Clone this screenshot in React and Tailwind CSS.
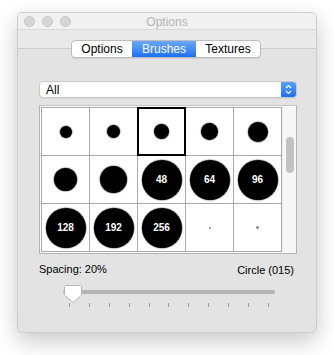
import React from 'react';

const font = { fontFamily: '"Liberation Sans", Arial, sans-serif' };

// brush presets: diameter in px, label for the big ones
const brushes = [
  { d: 12 }, { d: 13 }, { d: 15, selected: true }, { d: 17 }, { d: 20 },
  { d: 23 }, { d: 27 }, { d: 40, label: '48' }, { d: 40, label: '64' }, { d: 40, label: '96' },
  { d: 40, label: '128' }, { d: 40, label: '192' }, { d: 40, label: '256' }, { dot: 2 }, { dot: 3 },
];

const TrafficLight = () => (
  <div className="w-[11px] h-[11px] rounded-full bg-[#d6d6d6] border border-[#c6c6c6]" />
);

const BrushCell = ({ b }) => (
  <div
    className={`bg-white flex items-center justify-center ${
      b.selected ? 'outline-2 outline-black -outline-offset-1' : ''
    }`}
  >
    {b.dot ? (
      <div
        className={`rounded-full bg-[#8a8a8a] ${b.dot === 2 ? 'w-[2px] h-[2px]' : 'w-[3px] h-[3px]'}`}
      />
    ) : (
      <div
        className="rounded-full bg-black flex items-center justify-center shadow-[0_0_1px_0.5px_rgba(0,0,0,0.5)]"
        style={{ width: b.d, height: b.d }}
      >
        {b.label && <span className="text-white text-[10px] font-bold leading-none">{b.label}</span>}
      </div>
    )}
  </div>
);

const App = () => {
  const ticks = Array.from({ length: 11 });

  return (
    <div className="w-[334px] h-[355px] bg-white pt-[12px] pl-[17px]" style={font}>
      <div className="w-[300px] h-[321px] rounded-[5px] overflow-hidden bg-[#e3e3e3] border border-[#cdcdcd] shadow-[0_8px_22px_rgba(0,0,0,0.22)] flex flex-col">
        {/* Title bar */}
        <div className="h-[16px] bg-[#f1f1f1] flex items-center relative">
          <div className="flex gap-[7px] pl-[6px]">
            <TrafficLight />
            <TrafficLight />
            <TrafficLight />
          </div>
          <div className="absolute inset-0 flex items-center justify-center text-[12px] text-[#b4b4b4] pt-[2px]">
            Options
          </div>
        </div>
        <div className="h-[20px] bg-[#e9e9e9] border-t border-[#d9d9d9] border-b border-b-[#cbcbcb]" />

        {/* Tabs */}
        <div className="flex justify-center -mt-[9px] pr-[2px]">
          <div className="flex h-[18px] rounded-[4px] border border-[#bcbcbc] bg-white shadow-[0_1px_0_rgba(0,0,0,0.08)] overflow-hidden text-[12px] leading-none">
            <div className="w-[60px] flex items-center justify-center text-black">Options</div>
            <div className="w-[64px] flex items-center justify-center text-white bg-gradient-to-b from-[#6aa9fb] to-[#1b6ff5]">
              Brushes
            </div>
            <div className="w-[64px] flex items-center justify-center text-black">Textures</div>
          </div>
        </div>

        <div className="flex flex-col pl-[21px] pr-[19px]">
          {/* Popup button */}
          <div className="mt-[23px] h-[17px] flex rounded-[4px] bg-white border border-[#c8c8c8] shadow-[0_1px_0_rgba(0,0,0,0.06)] overflow-hidden">
            <div className="flex-1 flex items-center pl-[6px] text-[12px] text-black">All</div>
            <div className="w-[15px] bg-gradient-to-b from-[#5ba0fa] to-[#1a6ff4] flex items-center justify-center">
              <svg width="7" height="11" viewBox="0 0 7 11" fill="none" stroke="white" strokeWidth="1.2">
                <path d="M1 4 L3.5 1.5 L6 4" />
                <path d="M1 7 L3.5 9.5 L6 7" />
              </svg>
            </div>
          </div>

          {/* Brush grid */}
          <div className="mt-[7px] h-[149px] border border-[#b4b4b4] border-t-[#c4c4c4] bg-white flex pl-px pt-px">
            <div className="grid grid-cols-[repeat(5,47px)] grid-rows-[repeat(3,47px)] gap-px bg-[#a9a9a9] p-px self-start">
              {brushes.map((b, i) => (
                <BrushCell key={i} b={b} />
              ))}
            </div>
            <div className="flex-1 bg-[#f7f7f7] border-l border-[#ededed] flex justify-center pt-[30px]">
              <div className="w-[8px] h-[36px] rounded-full bg-[#c2c2c2]" />
            </div>
          </div>

          {/* Labels */}
          <div className="mt-[8px] flex justify-between items-center text-[11px] text-black leading-[13px]">
            <span>Spacing: 20%</span>
            <span className="pr-[3px] pt-[2px]">Circle (015)</span>
          </div>

          {/* Slider */}
          <div className="mt-[7px] ml-[24px] w-[212px] relative h-[24px]">
            <div className="absolute left-0 right-0 top-[6px] h-[4px] rounded-full bg-[#b3b3b3]" />
            <svg className="absolute left-0 top-0" width="20" height="20" viewBox="0 0 20 20">
              <path
                d="M2.5 1.5 H17.5 Q18.5 1.5 18.5 2.5 V11 L10 18.5 L1.5 11 V2.5 Q1.5 1.5 2.5 1.5 Z"
                fill="white"
                stroke="#b8b8b8"
                strokeWidth="1"
              />
            </svg>
            <div className="absolute left-[6px] right-[6px] top-[19px] flex justify-between">
              {ticks.map((_, i) => (
                <div key={i} className="w-px h-[4px] bg-[#9a9a9a]" />
              ))}
            </div>
          </div>
        </div>
      </div>
    </div>
  );
};

export default App;
